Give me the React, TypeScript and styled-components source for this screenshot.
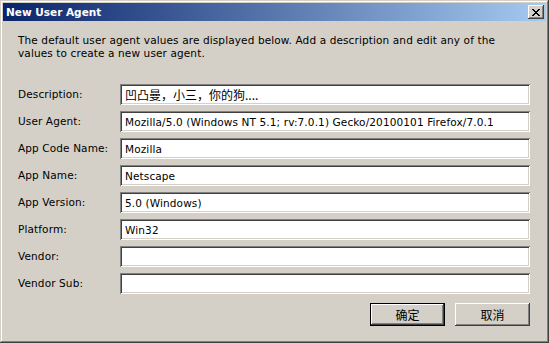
import React from 'react';
import styled, { createGlobalStyle } from 'styled-components';

const GlobalStyle = createGlobalStyle`
  html, body {
    margin: 0;
    padding: 0;
    background: #d4d0c8;
  }
`;

const uiFont = `"DejaVu Sans", "Noto Sans CJK SC", sans-serif`;
const cjkFont = `"Noto Sans CJK SC", "DejaVu Sans", sans-serif`;

const Window = styled.div`
  box-sizing: border-box;
  width: 549px;
  height: 343px;
  padding: 3px;
  background: #d4d0c8;
  font-family: ${uiFont};
  font-size: 10.5px;
  letter-spacing: 0.12px;
  color: #000;
  box-shadow: inset -1px -1px #404040, inset 1px 1px #d4d0c8,
    inset -2px -2px #808080, inset 2px 2px #ffffff;
  display: flex;
  flex-direction: column;
`;

const TitleBar = styled.div`
  height: 18px;
  display: flex;
  align-items: center;
  justify-content: space-between;
  padding: 0 2px 0 3px;
  background: linear-gradient(to right, #0a246a, #a6caf0);
`;

const Title = styled.span`
  color: #fff;
  font-weight: bold;
  font-size: 10.5px;
  letter-spacing: 0;
`;

const CloseBtn = styled.button.attrs({ type: 'button' })`
  box-sizing: border-box;
  width: 16px;
  height: 14px;
  padding: 0;
  border: none;
  background: #d4d0c8;
  display: flex;
  align-items: center;
  justify-content: center;
  box-shadow: inset -1px -1px #404040, inset 1px 1px #ffffff,
    inset -2px -2px #808080, inset 2px 2px #d4d0c8;
`;

const Body = styled.div`
  flex: 1;
  padding: 13px 13px 0 15px;
  display: flex;
  flex-direction: column;
`;

const Intro = styled.p`
  margin: 0 0 24px;
  line-height: 13px;
`;

const Form = styled.div`
  display: grid;
  grid-template-columns: 102px 410px;
  row-gap: 6px;
  align-items: center;
`;

const Label = styled.label`
  line-height: 13px;
`;

const Field = styled.div`
  box-sizing: border-box;
  height: 21px;
  padding: 0 4px 0 5px;
  display: flex;
  align-items: center;
  background: #fff;
  white-space: nowrap;
  overflow: hidden;
  box-shadow: inset 1px 1px #808080, inset -1px -1px #ffffff,
    inset 2px 2px #404040, inset -2px -2px #d4d0c8;
`;

const CjkText = styled.span`
  font-family: ${cjkFont};
  font-size: 12px;
  letter-spacing: 0;
`;

const Buttons = styled.div`
  display: flex;
  justify-content: flex-end;
  gap: 10px;
  margin-top: 9px;
  width: 512px;
`;

const Button = styled.button.attrs({ type: 'button' })<{ $default?: boolean }>`
  box-sizing: border-box;
  width: 75px;
  height: 23px;
  padding: 0;
  border: ${(p) => (p.$default ? '1px solid #000' : 'none')};
  background: #d4d0c8;
  font-family: ${cjkFont};
  font-size: 12px;
  color: #000;
  box-shadow: inset -1px -1px #404040, inset 1px 1px #ffffff,
    inset -2px -2px #808080, inset 2px 2px #d4d0c8;
`;

const CloseGlyph = () => (
  <svg width="8" height="7" viewBox="0 0 8 7" shapeRendering="crispEdges">
    <path
      fill="#000"
      d="M0 0h2v1H0zM6 0h2v1H6zM1 1h2v1H1zM5 1h2v1H5zM2 2h4v1H2zM3 3h2v1H3zM2 4h4v1H2zM1 5h2v1H1zM5 5h2v1H5zM0 6h2v1H0zM6 6h2v1H6z"
    />
  </svg>
);

const fields: { label: string; value: string; cjk?: boolean }[] = [
  { label: 'Description:', value: '凹凸曼，小三，你的狗....', cjk: true },
  { label: 'User Agent:', value: 'Mozilla/5.0 (Windows NT 5.1; rv:7.0.1) Gecko/20100101 Firefox/7.0.1' },
  { label: 'App Code Name:', value: 'Mozilla' },
  { label: 'App Name:', value: 'Netscape' },
  { label: 'App Version:', value: '5.0 (Windows)' },
  { label: 'Platform:', value: 'Win32' },
  { label: 'Vendor:', value: '' },
  { label: 'Vendor Sub:', value: '' },
];

const App: React.FC = () => (
  <>
    <GlobalStyle />
    <Window>
      <TitleBar>
        <Title>New User Agent</Title>
        <CloseBtn>
          <CloseGlyph />
        </CloseBtn>
      </TitleBar>
      <Body>
        <Intro>
          The default user agent values are displayed below. Add a description and edit any of the
          <br />
          values to create a new user agent.
        </Intro>
        <Form>
          {fields.map((f) => (
            <React.Fragment key={f.label}>
              <Label>{f.label}</Label>
              <Field>{f.cjk ? <CjkText>{f.value}</CjkText> : f.value}</Field>
            </React.Fragment>
          ))}
        </Form>
        <Buttons>
          <Button $default>确定</Button>
          <Button>取消</Button>
        </Buttons>
      </Body>
    </Window>
  </>
);

export default App;
